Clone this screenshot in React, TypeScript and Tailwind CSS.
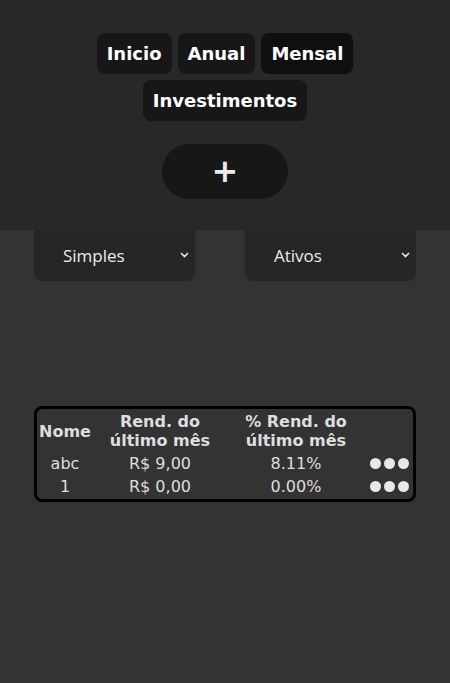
const rows = [
  { nome: "abc", rend: "R$ 9,00", pct: "8.11%" },
  { nome: "1", rend: "R$ 0,00", pct: "0.00%" },
];

function Chevron() {
  return (
    <svg width="9" height="6" viewBox="0 0 9 6" className="absolute right-[6px] top-[22px]">
      <path d="M1 1l3.5 3.5L8 1" fill="none" stroke="#e5e5e5" strokeWidth="1.6" />
    </svg>
  );
}

function Dots() {
  return (
    <div className="flex items-center justify-center gap-[3px]">
      <span className="w-[11px] h-[11px] rounded-full bg-[#e8e8e8]" />
      <span className="w-[11px] h-[11px] rounded-full bg-[#e8e8e8]" />
      <span className="w-[11px] h-[11px] rounded-full bg-[#e8e8e8]" />
    </div>
  );
}

export default function App() {
  const navBtn =
    "rounded-[8px] bg-[#171717] px-[10px] h-[41px] flex items-center text-white font-bold text-[18px]";

  return (
    <div className="min-h-[683px] bg-[#333333] font-['DejaVu_Sans',sans-serif]">
      {/* Header */}
      <div className="bg-[#282828] h-[230px] flex flex-col items-center pt-[33px]">
        <div className="flex gap-[6px]">
          <button className={navBtn}>Inicio</button>
          <button className={navBtn}>Anual</button>
          <button className={navBtn + " !bg-[#0f0f0f]"}>Mensal</button>
        </div>
        <div className="mt-[6px]">
          <button className={navBtn}>Investimentos</button>
        </div>
        <button className="mt-[23px] w-[126px] h-[55px] rounded-full bg-[#171717] text-[#ececec] font-bold text-[32px] leading-none flex items-center justify-center pb-[2px]">
          +
        </button>
      </div>

      {/* Filters */}
      <div className="mx-[34px] flex justify-between">
        <div className="relative w-[161px] h-[51px] bg-[#262626] rounded-b-[8px] pl-[29px] flex items-center text-[17px] text-[#ececec] font-['Open_Sans',sans-serif]">
          Simples
          <Chevron />
        </div>
        <div className="relative w-[171px] h-[51px] bg-[#262626] rounded-b-[8px] pl-[29px] flex items-center text-[17px] text-[#ececec] font-['Open_Sans',sans-serif]">
          Ativos
          <Chevron />
        </div>
      </div>

      {/* Table */}
      <div className="mx-[34px] mt-[125px] border-[3px] border-black rounded-[8px] py-[1px] text-[16px] text-[#dedede]">
        <div className="grid grid-cols-[56px_134px_138px_48px] items-center font-bold leading-[19px] text-center py-[2px]">
          <div>Nome</div>
          <div>Rend. do<br />último mês</div>
          <div>% Rend. do<br />último mês</div>
          <div />
        </div>
        {rows.map((r) => (
          <div key={r.nome} className="grid grid-cols-[56px_134px_138px_48px] items-center text-center h-[23px] leading-[19px]">
            <div>{r.nome}</div>
            <div>{r.rend}</div>
            <div>{r.pct}</div>
            <Dots />
          </div>
        ))}
      </div>
    </div>
  );
}
